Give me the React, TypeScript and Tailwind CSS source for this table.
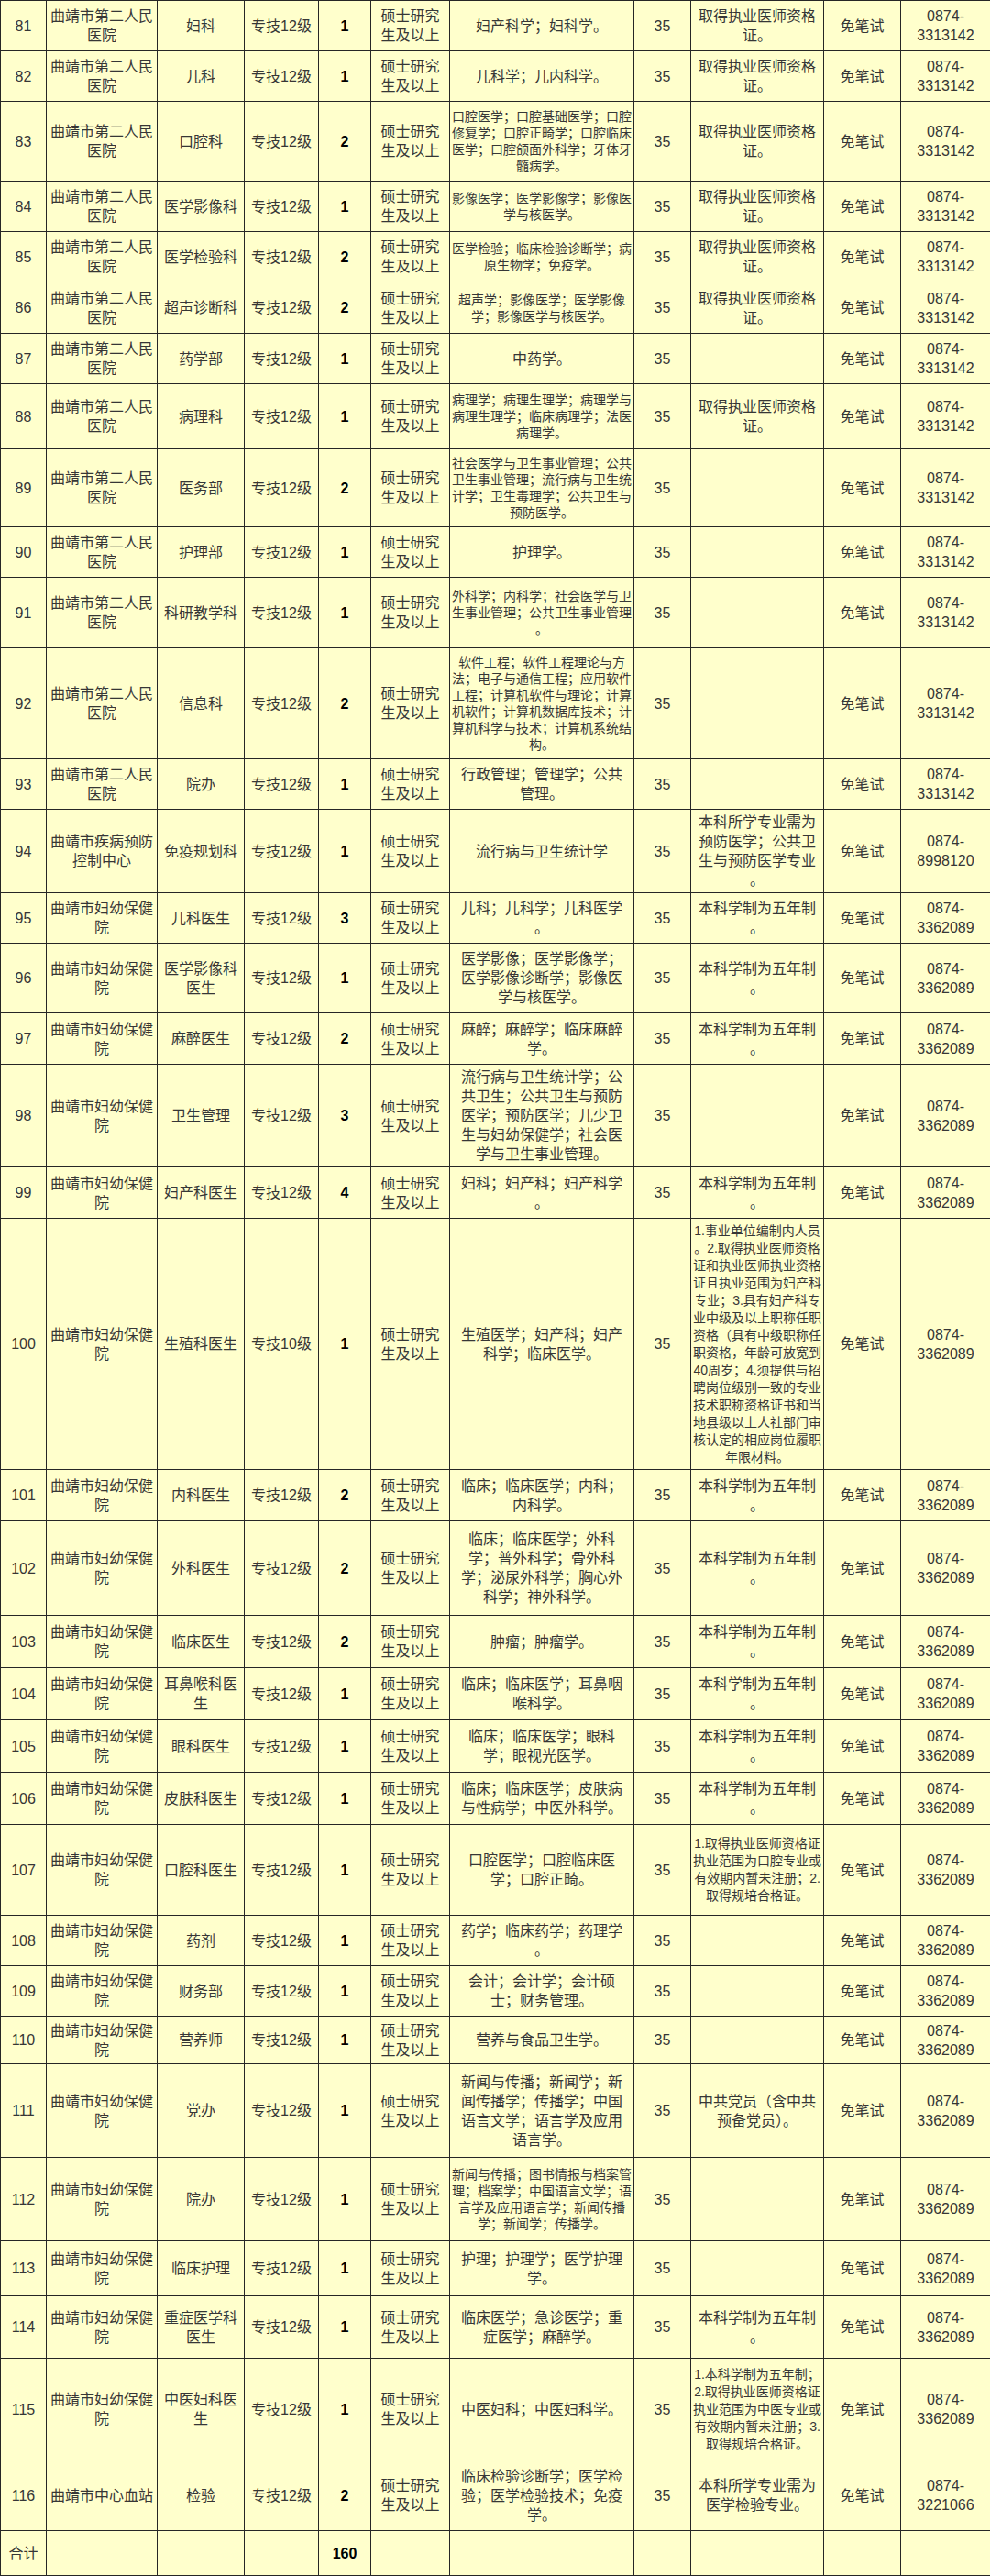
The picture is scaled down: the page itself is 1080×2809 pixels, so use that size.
import React from "react"

type Row = {
  n: number
  unit: string
  dept: string
  lvl?: string
  cnt: number
  major: string
  ms?: boolean
  req?: string
  rs?: boolean
  tel: string
  h: string
}

const U2 = "曲靖市第二人民\n医院"
const UF = "曲靖市妇幼保健\n院"
const C1 = "取得执业医师资格\n证。"
const C5 = "本科学制为五年制\n。"
const T1 = "0874-\n3313142"
const T3 = "0874-\n3362089"

const rows: Row[] = [
  { n: 81, unit: U2, dept: "妇科", cnt: 1, major: "妇产科学；妇科学。", req: C1, tel: T1, h: "h-[55px]" },
  { n: 82, unit: U2, dept: "儿科", cnt: 1, major: "儿科学；儿内科学。", req: C1, tel: T1, h: "h-[55px]" },
  {
    n: 83, unit: U2, dept: "口腔科", cnt: 2, ms: true,
    major: "口腔医学；口腔基础医学；口腔\n修复学；口腔正畸学；口腔临床\n医学；口腔颌面外科学；牙体牙\n髓病学。",
    req: C1, tel: T1, h: "h-[87px]",
  },
  { n: 84, unit: U2, dept: "医学影像科", cnt: 1, ms: true, major: "影像医学；医学影像学；影像医\n学与核医学。", req: C1, tel: T1, h: "h-[55px]" },
  { n: 85, unit: U2, dept: "医学检验科", cnt: 2, ms: true, major: "医学检验；临床检验诊断学；病\n原生物学；免疫学。", req: C1, tel: T1, h: "h-[55px]" },
  { n: 86, unit: U2, dept: "超声诊断科", cnt: 2, ms: true, major: "超声学；影像医学；医学影像\n学；影像医学与核医学。", req: C1, tel: T1, h: "h-[56px]" },
  { n: 87, unit: U2, dept: "药学部", cnt: 1, major: "中药学。", tel: T1, h: "h-[55px]" },
  {
    n: 88, unit: U2, dept: "病理科", cnt: 1, ms: true,
    major: "病理学；病理生理学；病理学与\n病理生理学；临床病理学；法医\n病理学。",
    req: C1, tel: T1, h: "h-[71px]",
  },
  {
    n: 89, unit: U2, dept: "医务部", cnt: 2, ms: true,
    major: "社会医学与卫生事业管理；公共\n卫生事业管理；流行病与卫生统\n计学；卫生毒理学；公共卫生与\n预防医学。",
    tel: T1, h: "h-[85px]",
  },
  { n: 90, unit: U2, dept: "护理部", cnt: 1, major: "护理学。", tel: T1, h: "h-[55px]" },
  {
    n: 91, unit: U2, dept: "科研教学科", cnt: 1, ms: true,
    major: "外科学；内科学；社会医学与卫\n生事业管理；公共卫生事业管理\n。",
    tel: T1, h: "h-[77px]",
  },
  {
    n: 92, unit: U2, dept: "信息科", cnt: 2, ms: true,
    major: "软件工程；软件工程理论与方\n法；电子与通信工程；应用软件\n工程；计算机软件与理论；计算\n机软件；计算机数据库技术；计\n算机科学与技术；计算机系统结\n构。",
    tel: T1, h: "h-[121px]",
  },
  { n: 93, unit: U2, dept: "院办", cnt: 1, major: "行政管理；管理学；公共\n管理。", tel: T1, h: "h-[55px]" },
  {
    n: 94, unit: "曲靖市疾病预防\n控制中心", dept: "免疫规划科", cnt: 1, major: "流行病与卫生统计学",
    req: "本科所学专业需为\n预防医学；公共卫\n生与预防医学专业\n。", tel: "0874-\n8998120", h: "h-[91px]",
  },
  { n: 95, unit: UF, dept: "儿科医生", cnt: 3, major: "儿科；儿科学；儿科医学\n。", req: C5, tel: T3, h: "h-[55px]" },
  {
    n: 96, unit: UF, dept: "医学影像科\n医生", cnt: 1,
    major: "医学影像；医学影像学；\n医学影像诊断学；影像医\n学与核医学。", req: C5, tel: T3, h: "h-[76px]",
  },
  { n: 97, unit: UF, dept: "麻醉医生", cnt: 2, major: "麻醉；麻醉学；临床麻醉\n学。", req: C5, tel: T3, h: "h-[56px]" },
  {
    n: 98, unit: UF, dept: "卫生管理", cnt: 3,
    major: "流行病与卫生统计学；公\n共卫生；公共卫生与预防\n医学；预防医学；儿少卫\n生与妇幼保健学；社会医\n学与卫生事业管理。",
    tel: T3, h: "h-[112px]",
  },
  { n: 99, unit: UF, dept: "妇产科医生", cnt: 4, major: "妇科；妇产科；妇产科学\n。", req: C5, tel: T3, h: "h-[56px]" },
  {
    n: 100, unit: UF, dept: "生殖科医生", lvl: "专技10级", cnt: 1, major: "生殖医学；妇产科；妇产\n科学；临床医学。", rs: true,
    req: "1.事业单位编制内人员\n。2.取得执业医师资格\n证和执业医师执业资格\n证且执业范围为妇产科\n专业；3.具有妇产科专\n业中级及以上职称任职\n资格（具有中级职称任\n职资格，年龄可放宽到\n40周岁；4.须提供与招\n聘岗位级别一致的专业\n技术职称资格证书和当\n地县级以上人社部门审\n核认定的相应岗位履职\n年限材料。",
    tel: T3, h: "h-[274px]",
  },
  { n: 101, unit: UF, dept: "内科医生", cnt: 2, major: "临床；临床医学；内科；\n内科学。", req: C5, tel: T3, h: "h-[56px]" },
  {
    n: 102, unit: UF, dept: "外科医生", cnt: 2,
    major: "临床；临床医学；外科\n学；普外科学；骨外科\n学；泌尿外科学；胸心外\n科学；神外科学。", req: C5, tel: T3, h: "h-[103px]",
  },
  { n: 103, unit: UF, dept: "临床医生", cnt: 2, major: "肿瘤；肿瘤学。", req: C5, tel: T3, h: "h-[57px]" },
  { n: 104, unit: UF, dept: "耳鼻喉科医\n生", cnt: 1, major: "临床；临床医学；耳鼻咽\n喉科学。", req: C5, tel: T3, h: "h-[57px]" },
  { n: 105, unit: UF, dept: "眼科医生", cnt: 1, major: "临床；临床医学；眼科\n学；眼视光医学。", req: C5, tel: T3, h: "h-[57px]" },
  { n: 106, unit: UF, dept: "皮肤科医生", cnt: 1, major: "临床；临床医学；皮肤病\n与性病学；中医外科学。", req: C5, tel: T3, h: "h-[57px]" },
  {
    n: 107, unit: UF, dept: "口腔科医生", cnt: 1, major: "口腔医学；口腔临床医\n学；口腔正畸。", rs: true,
    req: "1.取得执业医师资格证\n执业范围为口腔专业或\n有效期内暂未注册；2.\n取得规培合格证。", tel: T3, h: "h-[99px]",
  },
  { n: 108, unit: UF, dept: "药剂", cnt: 1, major: "药学；临床药学；药理学\n。", tel: T3, h: "h-[55px]" },
  { n: 109, unit: UF, dept: "财务部", cnt: 1, major: "会计；会计学；会计硕\n士；财务管理。", tel: T3, h: "h-[55px]" },
  { n: 110, unit: UF, dept: "营养师", cnt: 1, major: "营养与食品卫生学。", tel: T3, h: "h-[52px]" },
  {
    n: 111, unit: UF, dept: "党办", cnt: 1, major: "新闻与传播；新闻学；新\n闻传播学；传播学；中国\n语言文学；语言学及应用\n语言学。",
    req: "中共党员（含中共\n预备党员）。", tel: T3, h: "h-[102px]",
  },
  {
    n: 112, unit: UF, dept: "院办", cnt: 1, ms: true,
    major: "新闻与传播；图书情报与档案管\n理；档案学；中国语言文学；语\n言学及应用语言学；新闻传播\n学；新闻学；传播学。", tel: T3, h: "h-[91px]",
  },
  { n: 113, unit: UF, dept: "临床护理", cnt: 1, major: "护理；护理学；医学护理\n学。", tel: T3, h: "h-[60px]" },
  { n: 114, unit: UF, dept: "重症医学科\n医生", cnt: 1, major: "临床医学；急诊医学；重\n症医学；麻醉学。", req: C5, tel: T3, h: "h-[68px]" },
  {
    n: 115, unit: UF, dept: "中医妇科医\n生", cnt: 1, major: "中医妇科；中医妇科学。", rs: true,
    req: "1.本科学制为五年制；\n2.取得执业医师资格证\n执业范围为中医专业或\n有效期内暂未注册；3.\n取得规培合格证。", tel: T3, h: "h-[111px]",
  },
  {
    n: 116, unit: "曲靖市中心血站", dept: "检验", cnt: 2, major: "临床检验诊断学；医学检\n验；医学检验技术；免疫\n学。",
    req: "本科所学专业需为\n医学检验专业。", tel: "0874-\n3221066", h: "h-[77px]",
  },
]

const widths = ["w-[50px]", "w-[121px]", "w-[95px]", "w-[81px]", "w-[57px]", "w-[86px]", "w-[201px]", "w-[62px]", "w-[145px]", "w-[84px]", "w-[98px]"]

const cell = "border border-[#262626] p-0 text-center align-middle whitespace-pre"
const big = "text-[16px] leading-[21px]"
const small = "text-[14px] leading-[18px]"

export default function App() {
  return (
    <div className="w-[1080px] bg-white font-['Liberation_Sans','Noto_Sans_CJK_SC',sans-serif] text-[#363636]">
      <table className="w-[1080px] table-fixed border-collapse bg-[#ffffcc]">
        <colgroup>
          {widths.map((w) => (
            <col key={w} className={w} />
          ))}
        </colgroup>
        <tbody>
          {rows.map((r) => (
            <tr key={r.n} className={r.h}>
              <td className={`${cell} ${big}`}>{r.n}</td>
              <td className={`${cell} ${big}`}>{r.unit}</td>
              <td className={`${cell} ${big}`}>{r.dept}</td>
              <td className={`${cell} ${big}`}>{r.lvl ?? "专技12级"}</td>
              <td className={`${cell} ${big} font-bold text-black`}>{r.cnt}</td>
              <td className={`${cell} ${big}`}>{"硕士研究\n生及以上"}</td>
              <td className={`${cell} ${r.ms ? small : big}`}>{r.major}</td>
              <td className={`${cell} ${big}`}>35</td>
              <td className={`${cell} ${r.rs ? "text-[14px] leading-[19px]" : big}`}>{r.req ?? ""}</td>
              <td className={`${cell} ${big}`}>免笔试</td>
              <td className={`${cell} ${big}`}>{r.tel}</td>
            </tr>
          ))}
          <tr className="h-[49px]">
            <td className={`${cell} ${big}`}>合计</td>
            <td className={cell}></td>
            <td className={cell}></td>
            <td className={cell}></td>
            <td className={`${cell} ${big} font-bold text-black`}>160</td>
            <td className={cell}></td>
            <td className={cell}></td>
            <td className={cell}></td>
            <td className={cell}></td>
            <td className={cell}></td>
            <td className={cell}></td>
          </tr>
        </tbody>
      </table>
    </div>
  )
}
